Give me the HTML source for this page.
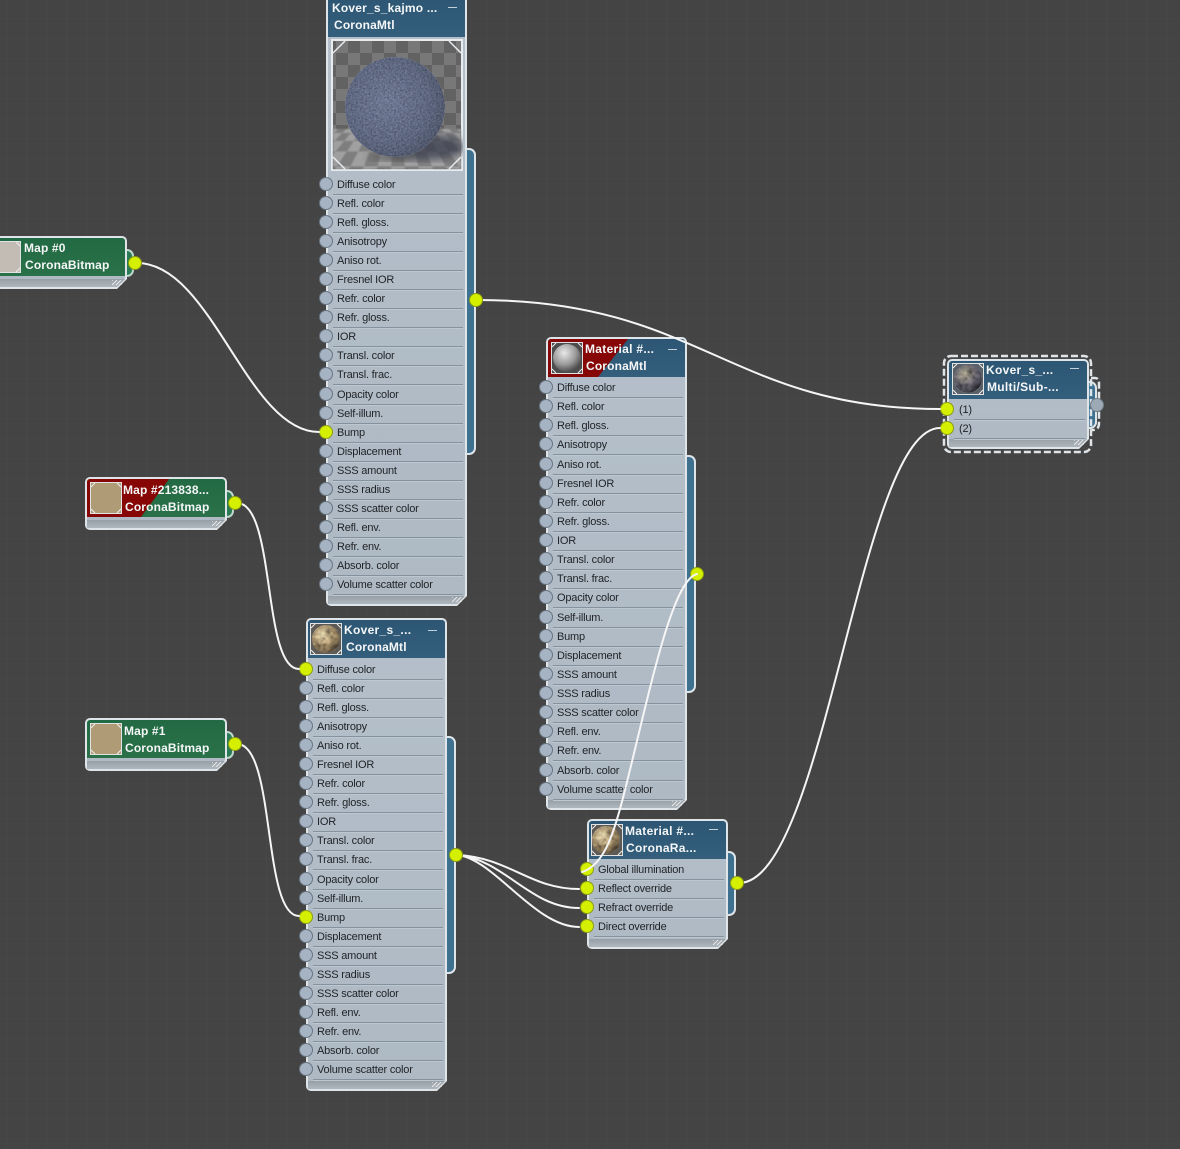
<!DOCTYPE html>
<html><head><meta charset="utf-8"><style>
html,body{margin:0;padding:0;background:#444}
#p{position:relative;width:1180px;height:1149px;overflow:hidden;background-color:#444;filter:blur(.3px);
background-image:linear-gradient(90deg,rgba(90,90,90,.16) 1px,transparent 1px),linear-gradient(rgba(90,90,90,.12) 1px,transparent 1px);
background-size:20px 20px;background-position:6px 18px;font-family:"Liberation Sans",sans-serif}
.n{position:absolute}
.bg{position:absolute;inset:0;background:#dfe4e8;border-radius:5px;clip-path:polygon(0 0,100% 0,100% calc(100% - 10px),calc(100% - 10px) 100%,0 100%)}
.in{position:absolute;inset:2px;border-radius:3px;background:linear-gradient(#b4bfca,#aeb9c4);clip-path:polygon(0 0,100% 0,100% calc(100% - 9px),calc(100% - 9px) 100%,0 100%)}
.st{position:absolute;left:2px;right:2px;bottom:2px;height:8px;background:linear-gradient(#979fa7,#b0b8bf);clip-path:polygon(0 0,100% 0,calc(100% - 8px) 100%,0 100%)}
.sl{position:absolute;right:5px;bottom:4px;width:10px;height:5px;background:repeating-linear-gradient(135deg,#e6e6e6 0 1px,transparent 1px 3px)}
.h{position:absolute;left:2px;right:2px;top:2px;border-radius:3px 3px 0 0;background:linear-gradient(#2c5673,#345f7c);overflow:hidden}
.h.gr{background:linear-gradient(#226a43,#2a7149)}
.h b{position:absolute;white-space:nowrap;color:#f4f6f7;font-size:12px;line-height:14px;font-weight:bold;letter-spacing:.15px}
.red{position:absolute;inset:0;background:#870606}
.min{position:absolute;width:9px;height:1px;background:#c2d2dc}
.rows{position:absolute;left:0;right:0}
.r{position:relative;height:19.05px;line-height:18px;font-size:11px;color:#1f2225;padding-left:11px;white-space:nowrap;letter-spacing:-.2px}
.c .r{height:19.14px}
.r::after{content:"";position:absolute;left:7px;right:4px;top:18px;height:1px;background:#85919c;box-shadow:0 1px 0 #bdc7d0}
.r::before{content:"";position:absolute;left:-7px;top:1px;width:12px;height:12px;border-radius:50%;background:#a6b3c2;border:1px solid #687480}
.r.g::before{background:#d5ef00;border-color:#8b9c14}
.tab{position:absolute;background:#3e7090;border:2px solid #dfe4e8;border-left:0;border-radius:0 7px 7px 0;box-sizing:border-box}
.tab.gr{background:#2a7a55;border-color:#bcd8cb}
.d{position:absolute;width:14px;height:14px;border-radius:50%;background:#d5ef00;box-sizing:border-box;border:1px solid #8a9b10;margin:-1px}
.th{position:absolute;box-sizing:border-box;border:1px solid #dfe3e3;overflow:hidden}
.th svg,.prev svg{position:absolute;left:0;top:0;display:block}
svg.w{position:absolute;left:0;top:0;pointer-events:none}
.prev{overflow:hidden}
.chk{position:absolute;left:2px;top:2px;width:128px;height:128px;background:repeating-conic-gradient(#626262 0 25%,#787878 0 50%) 3px 0/24px 24px}
.fl{position:absolute;left:2px;top:90px;width:128px;height:40px;overflow:hidden;perspective:60px;perspective-origin:50% -20px;filter:blur(.7px)}
.fl i{position:absolute;left:-236px;top:-60px;width:600px;height:100px;transform-origin:50% 100%;transform:rotateX(62deg);background:repeating-conic-gradient(#7e7e7e 0 25%,#a0a0a0 0 50%) 0 0/28px 28px}
</style></head><body><div id="p">
<svg width="0" height="0" style="position:absolute"><defs>
<filter id="nz" x="0" y="0" width="100%" height="100%"><feTurbulence type="fractalNoise" baseFrequency=".55" numOctaves="2" seed="4"/><feColorMatrix values=".7 0 0 0 .15 .7 0 0 0 .15 .7 0 0 0 .15 0 0 0 0 1"/><feComposite in2="SourceGraphic" operator="in"/><feBlend in2="SourceGraphic" mode="overlay"/></filter>
<filter id="nb" x="0" y="0" width="100%" height="100%"><feTurbulence type="fractalNoise" baseFrequency=".2" numOctaves="2" seed="9"/><feColorMatrix values=".9 0 0 0 .05 .9 0 0 0 .05 .9 0 0 0 .05 0 0 0 0 1"/><feComposite in2="SourceGraphic" operator="in"/><feBlend in2="SourceGraphic" mode="overlay"/></filter>
<filter id="bl"><feGaussianBlur stdDeviation="4"/></filter>
<radialGradient id="gs" cx=".4" cy=".32" r=".75"><stop offset="0" stop-color="#e8e8e8"/><stop offset=".55" stop-color="#9b9b9b"/><stop offset="1" stop-color="#3a3a3a"/></radialGradient>
<radialGradient id="gb" cx=".38" cy=".35" r=".75"><stop offset="0" stop-color="#d9c8a2"/><stop offset=".6" stop-color="#97825f"/><stop offset="1" stop-color="#3f362a"/></radialGradient>
<radialGradient id="gm" cx=".38" cy=".32" r=".75"><stop offset="0" stop-color="#a09a86"/><stop offset=".6" stop-color="#5f5c68"/><stop offset="1" stop-color="#22242a"/></radialGradient>
<radialGradient id="gk" cx=".42" cy=".45" r=".7"><stop offset="0" stop-color="#6f7892"/><stop offset=".6" stop-color="#5e6780"/><stop offset="1" stop-color="#484e60"/></radialGradient>
</defs></svg>

<!-- Tabs -->
<div class="tab" style="left:465px;top:148px;width:11px;height:307px"></div>
<div class="tab" style="left:445px;top:736px;width:11px;height:238px"></div>
<div class="tab" style="left:685px;top:455px;width:11px;height:238px"></div>
<div class="tab" style="left:726px;top:851px;width:10px;height:65px"></div>
<div class="tab" style="left:1086px;top:381px;width:11px;height:48px"></div>
<div class="tab gr" style="left:125px;top:249px;width:9px;height:28px"></div>
<div class="tab gr" style="left:225px;top:490px;width:9px;height:28px"></div>
<div class="tab gr" style="left:225px;top:731px;width:9px;height:28px"></div>

<!-- Map #0 -->
<div class="n" style="left:-20px;top:236px;width:147px;height:53px"><i class="bg"></i><i class="in"></i><i class="st"></i><i class="sl"></i>
<div class="h gr" style="height:38px"><b style="left:42px;top:3px">Map #0</b><b style="left:43px;top:20px">CoronaBitmap</b></div>
<div class="th" style="left:4px;top:5px;width:37px;height:32px;background:#c3bcb4"><svg width="35" height="30" fill="none" stroke="#eee"><path d="M31,0L35,4M31,30L35,26"/></svg></div></div>

<!-- Map #213838 -->
<div class="n" style="left:85px;top:477px;width:142px;height:53px"><i class="bg"></i><i class="in"></i><i class="st"></i><i class="sl"></i>
<div class="h gr" style="height:38px"><i class="red" style="clip-path:polygon(0 0,82px 0,54px 100%,0 100%)"></i><b style="left:36px;top:4px">Map #213838...</b><b style="left:38px;top:21px">CoronaBitmap</b></div>
<div class="th" style="left:5px;top:5px;width:32px;height:32px;background:#af9b76"><svg width="30" height="30" fill="none" stroke="#eee"><path d="M0,4L4,0M26,0L30,4M0,26L4,30M26,30L30,26"/></svg></div></div>

<!-- Map #1 -->
<div class="n" style="left:85px;top:718px;width:142px;height:53px"><i class="bg"></i><i class="in"></i><i class="st"></i><i class="sl"></i>
<div class="h gr" style="height:38px"><b style="left:37px;top:4px">Map #1</b><b style="left:38px;top:21px">CoronaBitmap</b></div>
<div class="th" style="left:5px;top:5px;width:32px;height:32px;background:#af9b76"><svg width="30" height="30" fill="none" stroke="#eee"><path d="M0,4L4,0M26,0L30,4M0,26L4,30M26,30L30,26"/></svg></div></div>

<!-- Node A -->
<div class="n" style="left:326px;top:-6px;width:141px;height:612px"><i class="bg"></i><i class="in"></i><i class="st"></i><i class="sl"></i>
<div class="h" style="height:41px"><b style="left:4px;top:5px;letter-spacing:.2px">Kover_s_kajmo ...</b><b style="left:6px;top:22px">CoronaMtl</b><i class="min" style="left:120px;top:11px"></i></div>
<div class="prev" style="position:absolute;left:5px;top:45px;width:132px;height:132px;background:#e8ecef">
<div class="chk"></div><div class="fl"><i></i></div>
<svg width="132" height="132"><ellipse cx="92" cy="108" rx="42" ry="13" fill="#3d4150" opacity=".8" filter="url(#bl)"/>
<ellipse cx="60" cy="118" rx="24" ry="4" fill="#555" opacity=".7" filter="url(#bl)"/>
<circle cx="64" cy="68" r="50" fill="url(#gk)" filter="url(#nz)"/>
<path d="M2,14L14,2M118,2L130,14M2,118L14,130M118,130L130,118" stroke="#e8ecef" stroke-width="1.5"/></svg></div>
<div class="rows" style="top:182px">
<div class="r">Diffuse color</div><div class="r">Refl. color</div><div class="r">Refl. gloss.</div><div class="r">Anisotropy</div><div class="r">Aniso rot.</div><div class="r">Fresnel IOR</div><div class="r">Refr. color</div><div class="r">Refr. gloss.</div><div class="r">IOR</div><div class="r">Transl. color</div><div class="r">Transl. frac.</div><div class="r">Opacity color</div><div class="r">Self-illum.</div><div class="r g">Bump</div><div class="r">Displacement</div><div class="r">SSS amount</div><div class="r">SSS radius</div><div class="r">SSS scatter color</div><div class="r">Refl. env.</div><div class="r">Refr. env.</div><div class="r">Absorb. color</div><div class="r">Volume scatter color</div>
</div></div>

<!-- Node B -->
<div class="n" style="left:306px;top:618px;width:141px;height:473px"><i class="bg"></i><i class="in"></i><i class="st"></i><i class="sl"></i>
<div class="h" style="height:38px"><b style="left:36px;top:3px;letter-spacing:.3px">Kover_s_...</b><b style="left:38px;top:20px">CoronaMtl</b><i class="min" style="left:120px;top:10px"></i></div>
<div class="th" style="left:4px;top:5px;width:32px;height:32px;background:#5d5a55"><svg width="30" height="30"><circle cx="15" cy="15" r="14" fill="url(#gb)" filter="url(#nb)"/><path d="M0,4L4,0M26,0L30,4M0,26L4,30M26,30L30,26" stroke="#eee"/></svg></div>
<div class="rows" style="top:43px">
<div class="r g">Diffuse color</div><div class="r">Refl. color</div><div class="r">Refl. gloss.</div><div class="r">Anisotropy</div><div class="r">Aniso rot.</div><div class="r">Fresnel IOR</div><div class="r">Refr. color</div><div class="r">Refr. gloss.</div><div class="r">IOR</div><div class="r">Transl. color</div><div class="r">Transl. frac.</div><div class="r">Opacity color</div><div class="r">Self-illum.</div><div class="r g">Bump</div><div class="r">Displacement</div><div class="r">SSS amount</div><div class="r">SSS radius</div><div class="r">SSS scatter color</div><div class="r">Refl. env.</div><div class="r">Refr. env.</div><div class="r">Absorb. color</div><div class="r">Volume scatter color</div>
</div></div>

<!-- Node C -->
<div class="n c" style="left:546px;top:337px;width:141px;height:473px"><i class="bg"></i><i class="in"></i><i class="st"></i><i class="sl"></i>
<div class="h" style="height:38px"><i class="red" style="clip-path:polygon(0 0,80px 0,50px 100%,0 100%)"></i><b style="left:37px;top:3px;letter-spacing:.3px">Material #...</b><b style="left:38px;top:20px">CoronaMtl</b><i class="min" style="left:120px;top:10px"></i></div>
<div class="th" style="left:5px;top:5px;width:32px;height:32px;background:#4c4c4c"><svg width="30" height="30"><circle cx="15" cy="15" r="14" fill="url(#gs)"/><path d="M0,4L4,0M26,0L30,4M0,26L4,30M26,30L30,26" stroke="#eee"/></svg></div>
<div class="rows" style="top:42px">
<div class="r">Diffuse color</div><div class="r">Refl. color</div><div class="r">Refl. gloss.</div><div class="r">Anisotropy</div><div class="r">Aniso rot.</div><div class="r">Fresnel IOR</div><div class="r">Refr. color</div><div class="r">Refr. gloss.</div><div class="r">IOR</div><div class="r">Transl. color</div><div class="r">Transl. frac.</div><div class="r">Opacity color</div><div class="r">Self-illum.</div><div class="r">Bump</div><div class="r">Displacement</div><div class="r">SSS amount</div><div class="r">SSS radius</div><div class="r">SSS scatter color</div><div class="r">Refl. env.</div><div class="r">Refr. env.</div><div class="r">Absorb. color</div><div class="r">Volume scatter color</div>
</div></div>

<!-- Node D -->
<div class="n" style="left:587px;top:819px;width:141px;height:130px"><i class="bg"></i><i class="in"></i><i class="st"></i><i class="sl"></i>
<div class="h" style="height:38px"><b style="left:36px;top:3px;letter-spacing:.3px">Material #...</b><b style="left:37px;top:20px;letter-spacing:.3px">CoronaRa...</b><i class="min" style="left:120px;top:8px"></i></div>
<div class="th" style="left:4px;top:5px;width:32px;height:32px;background:#5d5a55"><svg width="30" height="30"><circle cx="14" cy="15" r="14" fill="url(#gb)" filter="url(#nb)"/><path d="M0,4L4,0M26,0L30,4M0,26L4,30M26,30L30,26" stroke="#eee"/></svg></div>
<div class="rows" style="top:42px">
<div class="r g">Global illumination</div><div class="r g">Reflect override</div><div class="r g">Refract override</div><div class="r g">Direct override</div>
</div></div>

<!-- Node E -->
<svg class="w" width="1180" height="1149" style="z-index:0"><rect x="944" y="356" width="147" height="96" rx="7" fill="none" stroke="#dfe4e8" stroke-width="2.5" stroke-dasharray="7 3"/><path d="M1091,378h4q4,0 4,5v40q0,7 -6,7h-2" fill="none" stroke="#dfe4e8" stroke-width="2.5" stroke-dasharray="7 3"/></svg>
<div class="n" style="left:947px;top:359px;width:142px;height:90px"><i class="bg"></i><i class="in"></i><i class="st"></i><i class="sl"></i>
<div class="h" style="height:38px"><b style="left:37px;top:2px;letter-spacing:.3px">Kover_s_...</b><b style="left:38px;top:19px;letter-spacing:.3px">Multi/Sub-...</b><i class="min" style="left:121px;top:7px"></i></div>
<div class="th" style="left:5px;top:4px;width:32px;height:32px;background:#5a6068"><svg width="30" height="30"><circle cx="15" cy="15" r="14" fill="url(#gm)" filter="url(#nb)"/><path d="M0,4L4,0M26,0L30,4M0,26L4,30M26,30L30,26" stroke="#eee"/></svg></div>
<div class="rows" style="top:42px">
<div class="r g" style="padding-left:12px">(1)</div><div class="r g" style="padding-left:12px">(2)</div>
</div></div>

<!-- Wires -->
<svg class="w" width="1180" height="1149" style="z-index:2" fill="none" stroke="#f5f5f5" stroke-width="2" stroke-linecap="round">
<path d="M137,263C212,263 247,432 319,432"/>
<path d="M478,300C700,300 730,409 940,409"/>
<path d="M237,503C276,503 262,669 299,669"/>
<path d="M237,744C276,744 262,916 299,916"/>
<path d="M458,855C510,858 530,889 579,889"/>
<path d="M458,855C505,860 530,908 579,908"/>
<path d="M458,855C495,860 535,927 579,927"/>
<path d="M739,883C825,883 860,428 940,428"/>
</svg>
<div class="d" style="left:129px;top:257px;z-index:3"></div>
<div class="d" style="left:229px;top:497px;z-index:3"></div>
<div class="d" style="left:229px;top:738px;z-index:3"></div>
<div class="d" style="left:470px;top:294px;z-index:3"></div>
<div class="d" style="left:450px;top:849px;z-index:3"></div>
<div class="d" style="left:691px;top:568px;z-index:3"></div>
<div class="d" style="left:731px;top:877px;z-index:3"></div>
<div class="d" style="left:1091px;top:399px;z-index:3;background:#9da9b5;border-color:#6f7b86"></div>
<svg class="w" width="1180" height="1149" style="z-index:4" fill="none" stroke="#f5f5f5" stroke-width="2" stroke-linecap="round">
<path d="M697,574C672,580 650,690 625,790C615,830 605,865 582,872"/>
</svg>
</div></body></html>
